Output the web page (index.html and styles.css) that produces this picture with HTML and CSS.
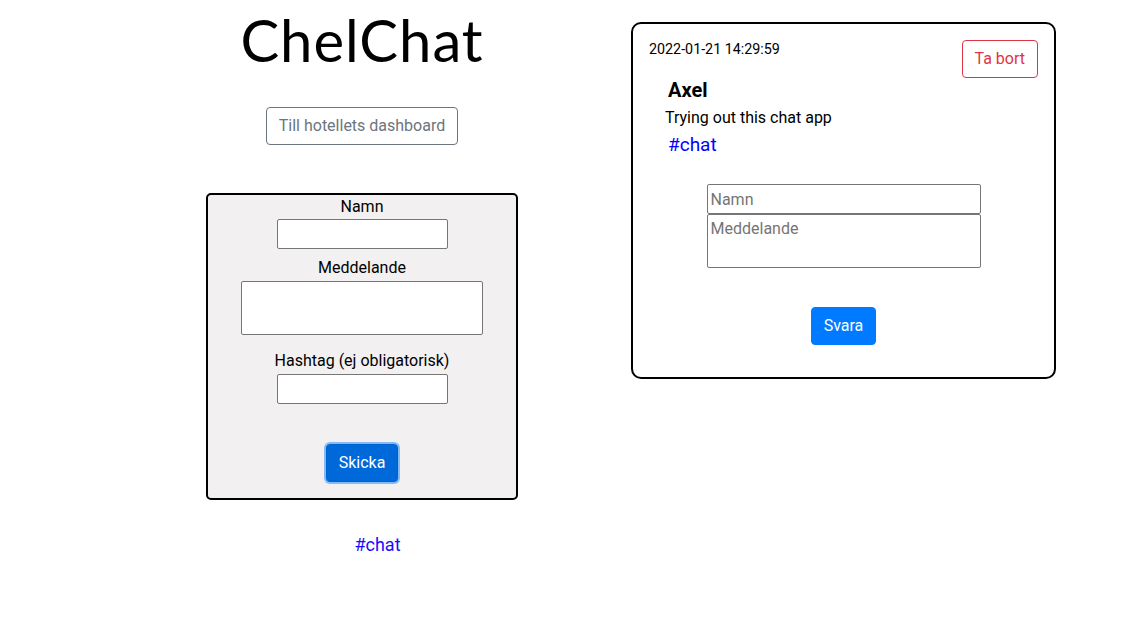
FILE: index.html
```html
<!DOCTYPE html>
<html lang="sv">
<head>
<meta charset="utf-8">
<title>ChelChat</title>
<link rel="stylesheet" href="styles.css">
</head>
<body>
<div class="page">
  <div class="left">
    <h1 class="title">ChelChat</h1>
    <button class="btn btn-outline-secondary">Till hotellets dashboard</button>
    <form class="post-form">
      <label class="lbl lbl-first">Namn</label>
      <input class="field field-short field-first" type="text">
      <label class="lbl lbl-mid">Meddelande</label>
      <textarea class="field field-area"></textarea>
      <label class="lbl lbl-hash">Hashtag (ej obligatorisk)</label>
      <input class="field field-short field-hash" type="text">
      <button type="button" class="btn btn-primary btn-focus">Skicka</button>
    </form>
    <a class="tag-link" href="#">#chat</a>
  </div>
  <div class="card">
    <div class="card-head">
      <small class="stamp">2022-01-21 14:29:59</small>
      <button class="btn btn-outline-danger">Ta bort</button>
    </div>
    <div class="msg">
      <div class="author">Axel</div>
      <div class="text">Trying out this chat app</div>
      <a class="msg-tag" href="#">#chat</a>
    </div>
    <div class="reply">
      <input class="field reply-name" type="text" placeholder="Namn">
      <textarea class="field reply-area" placeholder="Meddelande"></textarea>
      <button type="button" class="btn btn-svara">Svara</button>
    </div>
  </div>
</div>
</body>
</html>
```

FILE: styles.css
```css
* { box-sizing: border-box; }
html, body { margin: 0; padding: 0; background: #fff; }
body {
  font-family: Roboto, "Liberation Sans", sans-serif;
  font-size: 16px;
  line-height: 1.5;
  color: #212529;
}
.page {
  display: flex;
  align-items: flex-start;
}
.left {
  flex: 0 0 500px;
  width: 500px;
  margin-left: 112px;
  display: flex;
  flex-direction: column;
  align-items: center;
}
.title {
  margin: 4px 0 0 0;
  font-family: Lato, "Open Sans", sans-serif;
  font-weight: 400;
  font-size: 58px;
  line-height: 72px;
  letter-spacing: 1px;
  color: #000;
}
.btn {
  display: inline-block;
  font-family: Roboto, "Liberation Sans", sans-serif;
  font-size: 16px;
  line-height: 24px;
  padding: 6px 12px;
  border: 1px solid transparent;
  border-radius: 4px;
  background: transparent;
  cursor: pointer;
}
.btn-outline-secondary {
  margin-top: 31px;
  color: #6c757d;
  border-color: #6c757d;
}
.post-form {
  margin-top: 48px;
  width: 312px;
  height: 307px;
  border: 2px solid #000;
  border-radius: 5px;
  background: #f2f0f0;
  display: flex;
  flex-direction: column;
  align-items: center;
}
.lbl {
  display: block;
  line-height: 20px;
  color: #000;
}
.lbl-first { padding-top: 2px; }
.lbl-mid { margin-top: 9px; }
.lbl-hash { margin-top: 16px; }
.field {
  display: block;
  font-family: Roboto, "Liberation Sans", sans-serif;
  font-size: 16px;
  border: 1px solid #767676;
  border-radius: 2px;
  background: #fff;
  padding: 1px 3px;
  margin: 0;
  resize: none;
}
.field::placeholder { color: #757575; }
.field-short {
  width: 171px;
  height: 30px;
}
.field-first { margin-top: 2px; }
.field-hash { margin-top: 3px; }
.field-area {
  width: 242px;
  height: 54px;
  margin-top: 3px;
}
.btn-primary {
  margin-top: 40px;
  color: #fff;
  background: #0069d9;
  border-color: #0062cc;
}
.btn-focus {
  box-shadow: 0 0 0 2px rgba(38, 143, 255, 0.55);
}
.tag-link {
  margin-top: 31px;
  margin-left: 31px;
  font-size: 18px;
  line-height: 27px;
  color: #1a0dff;
  text-decoration: none;
}
.card {
  flex: 0 0 425px;
  margin-top: 22px;
  margin-left: 19px;
  width: 425px;
  border: 2px solid #000;
  border-radius: 10px;
  padding: 16px 16px 32px 16px;
}
.card-head {
  display: flex;
  justify-content: space-between;
  align-items: flex-start;
}
.stamp {
  font-size: 14.3px;
  line-height: 19.2px;
  color: #000;
}
.btn-outline-danger {
  color: #dc3545;
  border-color: #dc3545;
}
.msg {
  padding-left: 16px;
}
.author {
  margin-left: 3px;
  font-size: 20px;
  font-weight: 700;
  line-height: 24px;
  color: #000;
}
.text {
  margin-top: 4px;
  line-height: 24px;
  color: #000;
}
.msg-tag {
  display: inline-block;
  margin-top: 3px;
  margin-left: 3px;
  font-size: 19px;
  line-height: 23px;
  color: #0000ff;
  text-decoration: none;
}
.reply {
  margin-top: 26px;
  display: flex;
  flex-direction: column;
  align-items: center;
}
.reply-name {
  width: 274px;
  height: 30px;
}
.reply-area {
  width: 274px;
  height: 54px;
  padding-top: 4px;
}
.btn-svara {
  margin-top: 39px;
  color: #fff;
  background: #007bff;
  border-color: #007bff;
}
```
